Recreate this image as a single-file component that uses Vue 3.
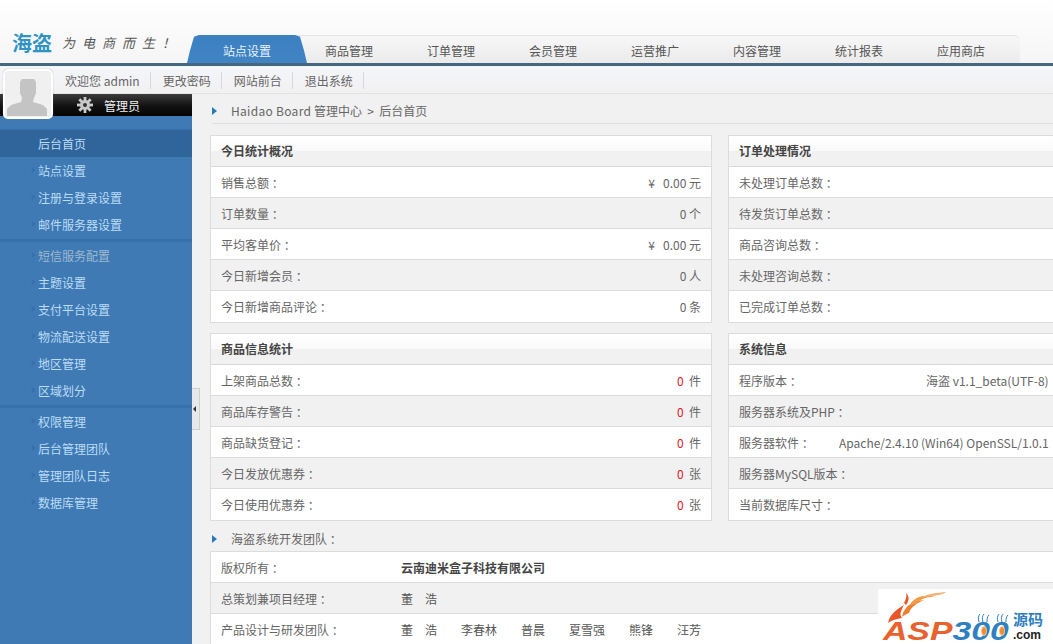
<script setup>
const tabs = ['站点设置', '商品管理', '订单管理', '会员管理', '运营推广', '内容管理', '统计报表', '应用商店']
const links = ['欢迎您 admin', '更改密码', '网站前台', '退出系统']
const menu = [
  ['后台首页', '站点设置', '注册与登录设置', '邮件服务器设置'],
  ['短信服务配置', '主题设置', '支付平台设置', '物流配送设置', '地区管理', '区域划分'],
  ['权限管理', '后台管理团队', '管理团队日志', '数据库管理']
]
const today = [
  ['销售总额 ：', '¥\u00a0\u00a0\u00a00.00 元'],
  ['订单数量 ：', '0 个'],
  ['平均客单价 ：', '¥\u00a0\u00a0\u00a00.00 元'],
  ['今日新增会员 ：', '0 人'],
  ['今日新增商品评论 ：', '0 条']
]
const orders = ['未处理订单总数 ：', '待发货订单总数 ：', '商品咨询总数 ：', '未处理咨询总数 ：', '已完成订单总数 ：']
const goods = [
  ['上架商品总数 ：', '件'],
  ['商品库存警告 ：', '件'],
  ['商品缺货登记 ：', '件'],
  ['今日发放优惠券 ：', '张'],
  ['今日使用优惠券 ：', '张']
]
const team = ['董　浩', '李春林', '普晨', '夏雪强', '熊锋', '汪芳']
</script>

<template>
  <div class="page">
    <header class="head">
      <div class="logo">
        <span class="logo-name">海盗</span>
        <span class="slogan">为电商而生！</span>
      </div>
      <nav class="tabs">
        <a v-for="(t, i) in tabs" :key="t" class="tab" :class="{ on: i === 0 }"><span>{{ t }}</span></a>
      </nav>
    </header>

    <div class="topbar">
      <a v-for="l in links" :key="l" class="toplink">{{ l }}</a>
    </div>

    <div class="avatar">
      <svg width="46" height="46" viewBox="0 0 46 46">
        <path fill="#c4c4c4" d="M17 6h12l2 3v11l-2 5-1 4 10 3 4 4v7H2v-7l4-4 10-3 1-4-2-5V9z" />
      </svg>
    </div>

    <div class="body">
      <aside class="side">
        <div class="role">
          <svg class="gear" width="16" height="16" viewBox="0 0 16 16">
            <g fill="#c9c9c9">
              <circle cx="8" cy="8" r="5" />
              <rect v-for="a in [0, 45, 90, 135]" :key="a" x="6.6" y="0" width="2.8" height="16" :transform="`rotate(${a} 8 8)`" />
            </g>
            <circle cx="8" cy="8" r="2" fill="#333" />
          </svg>
          <span>管理员</span>
        </div>
        <div v-for="(group, g) in menu" :key="g" class="group">
          <a v-for="m in group" :key="m" class="item" :class="{ active: m === '后台首页', dim: m === '短信服务配置' }">{{ m }}</a>
        </div>
      </aside>

      <main class="main">
        <button class="fold"></button>
        <div class="crumb"><i class="arrow"></i><span class="en">Haidao Board</span>&nbsp;管理中心&nbsp;&nbsp;&gt;&nbsp;&nbsp;后台首页</div>

        <div class="panels">
          <section class="panel">
            <h3>今日统计概况</h3>
            <div v-for="r in today" :key="r[0]" class="row"><span>{{ r[0] }}</span><span>{{ r[1] }}</span></div>
          </section>
          <section class="panel">
            <h3>订单处理情况</h3>
            <div v-for="r in orders" :key="r" class="row"><span>{{ r }}</span></div>
          </section>
          <section class="panel">
            <h3>商品信息统计</h3>
            <div v-for="r in goods" :key="r[0]" class="row"><span>{{ r[0] }}</span><span><b class="red">0</b>&nbsp;&nbsp;{{ r[1] }}</span></div>
          </section>
          <section class="panel">
            <h3>系统信息</h3>
            <div class="row start"><span class="sys-label">程序版本 ：</span><span class="ver">海盗 v1.1_beta(UTF-8)</span></div>
            <div class="row start"><span>服务器系统及PHP ：</span></div>
            <div class="row start"><span class="sys-label">服务器软件 ：</span><span>Apache/2.4.10 (Win64) OpenSSL/1.0.1</span></div>
            <div class="row start"><span>服务器MySQL版本 ：</span></div>
            <div class="row start"><span>当前数据库尺寸 ：</span></div>
          </section>
        </div>

        <div class="team-title"><i class="arrow"></i>海盗系统开发团队 ：</div>
        <section class="team">
          <div class="row start"><span class="team-label">版权所有 ：</span><strong>云南迪米盒子科技有限公司</strong></div>
          <div class="row start"><span class="team-label">总策划兼项目经理 ：</span><span class="dark">董　浩</span></div>
          <div class="row start">
            <span class="team-label">产品设计与研发团队 ：</span>
            <span class="names"><span v-for="n in team" :key="n" class="dark">{{ n }}</span></span>
          </div>
        </section>
      </main>
    </div>

    <div class="mark">
      <svg class="flame" width="70" height="42" viewBox="0 0 70 42">
        <path fill="#e8562a" d="M4 34C6 24 14 20 20 16c-3 6-5 9-2 13-5 1-10 2-14 5z" />
        <path fill="#ef7f2f" d="M18 28c2-12 12-16 22-17-7 3-13 7-15 13-2 1-5 2-7 4z" />
        <path fill="#f29a45" d="M26 16C30 8 40 5 52 8c-8-1-16 2-20 7z" />
        <path fill="#f4b070" d="M38 9C44 4 54 4 62 3c-3 3-9 3-14 4-4 0-7 1-10 2z" />
        <path fill="#e8562a" d="M20 14c2-4 3-6 2-10 4 4 3 8 0 12z" />
      </svg>
      <svg class="hairs" width="36" height="10" viewBox="0 0 36 10">
        <path fill="none" stroke="#2f7fc1" stroke-width="1" d="M3 9C2 6 2 3 4 1M7 9C6 6 6 3 8 1M11 9c0-3 0-5 2-7M22 9c-1-3-1-6 1-8M26 9c-1-3-1-6 1-8M30 9c0-3 0-5 2-7" />
      </svg>
      <span class="asp">ASP<em>300</em></span>
      <i class="egg e1"></i>
      <i class="egg e2"></i>
      <span class="mark-side"><b>源码</b><small>.com</small></span>
    </div>
  </div>
</template>

<style scoped>
.page {
  position: relative;
  width: 1053px;
  height: 644px;
  overflow: hidden;
  background: #f1f1f1;
  font-family: "Noto Sans CJK SC", "Liberation Sans", sans-serif;
  font-size: 12px;
  color: #666;
}

/* header */
.head {
  height: 66px;
  box-sizing: border-box;
  display: flex;
  align-items: flex-end;
  background: linear-gradient(#fff, #f5f5f5);
  border-bottom: 3px solid #47667f;
}
.logo {
  width: 196px;
  flex: none;
  height: 42px;
  padding-left: 12px;
  box-sizing: border-box;
  display: flex;
  align-items: center;
  gap: 10px;
}
.logo-name {
  font-size: 20px;
  font-weight: 700;
  color: #2f93c4;
}
.slogan {
  font-size: 13px;
  letter-spacing: 7px;
  font-style: italic;
  color: #555;
  white-space: nowrap;
}
.tabs {
  display: flex;
  height: 28px;
  background: linear-gradient(#f7f7f7, #ebebeb);
  border-top: 1px solid #e4e4e4;
  box-sizing: border-box;
  border-radius: 6px 6px 0 0;
  width: 824px;
}
.tab {
  position: relative;
  width: 102px;
  text-align: center;
  line-height: 30px;
  color: #555;
}
.tab span {
  position: relative;
}
.tab.on {
  color: #e8f3fb;
}
.tab.on::before {
  content: "";
  position: absolute;
  left: -9px;
  right: -9px;
  top: -1px;
  bottom: 0;
  background: linear-gradient(#3b80c1, #4184c4);
  clip-path: polygon(0 100%, 3px 55%, 7px 6%, 12px 0, calc(100% - 12px) 0, calc(100% - 7px) 6%, calc(100% - 3px) 55%, 100% 100%);
}

/* bar under header */
.topbar {
  height: 28px;
  box-sizing: border-box;
  display: flex;
  align-items: center;
  padding-left: 65px;
  background: linear-gradient(#fbf8f2, #f4f5f9 10%, #f1f1f1);
  border-top: 1px solid #e6f7fb;
  border-bottom: 1px solid #e2e2e2;
}
.toplink {
  padding-right: 10px;
  margin-right: 12px;
  border-right: 1px solid #d8d8d8;
  line-height: 17px;
  color: #666;
}
.avatar {
  position: absolute;
  left: 3px;
  top: 69px;
  width: 50px;
  height: 50px;
  box-sizing: border-box;
  padding-top: 2px;
  display: flex;
  justify-content: center;
  background: #f0f0f0;
  border: 2px solid #fff;
  border-radius: 5px;
  box-shadow: 0 0 1px #888;
  z-index: 2;
}

/* sidebar */
.body {
  display: flex;
  height: 550px;
}
.side {
  width: 192px;
  flex: none;
  background: #3f7ab5;
}
.role {
  height: 22px;
  display: flex;
  align-items: center;
  padding-left: 77px;
  gap: 11px;
  color: #f2f2f2;
  background: linear-gradient(#3c3c3c, #111 55%, #050505);
}
.gear {
  flex: none;
}
.group {
  border-bottom: 3px solid #3671ab;
  padding-bottom: 1px;
}
.role + .group {
  margin-top: 13px;
  border-top: 1px solid #3671ab;
}
.group:last-child {
  border-bottom: 0;
}
.item {
  display: block;
  position: relative;
  height: 27px;
  line-height: 27px;
  padding-left: 38px;
  color: #bcdcf5;
}
.item::before {
  content: "";
  position: absolute;
  left: 30px;
  top: 11px;
  width: 3px;
  height: 3px;
  border-top: 1px solid #336aa0;
  border-right: 1px solid #336aa0;
  transform: rotate(45deg);
}
.item.active {
  background: #2f659b;
}
.item.active::before {
  display: none;
}
.item.dim {
  color: #9db8cf;
}

/* main */
.main {
  position: relative;
  flex: 1;
  min-width: 0;
  padding: 0 0 0 18px;
}
.fold {
  position: absolute;
  left: 0;
  top: 294px;
  width: 8px;
  height: 42px;
  padding: 0;
  background: #e8e8e8;
  border: 1px solid #cfcfcf;
  border-left: 0;
}
.fold::after {
  content: "";
  position: absolute;
  left: 1px;
  top: 17px;
  border: 3px solid transparent;
  border-right-color: #333;
  border-left-width: 0;
}
.crumb {
  height: 30px;
  margin-left: 2px;
  display: flex;
  align-items: center;
  padding-top: 4px;
  box-sizing: border-box;
  color: #666;
  border-bottom: 1px solid #dedede;
  white-space: pre;
}
.en {
  letter-spacing: 0.3px;
}
.arrow {
  flex: none;
  width: 0;
  height: 0;
  margin-right: 14px;
  border-left: 5px solid #2a7ab8;
  border-top: 4px solid transparent;
  border-bottom: 4px solid transparent;
}
.panels {
  display: grid;
  grid-template-columns: 502px 502px;
  gap: 10px 16px;
  margin-top: 11px;
}
.panel {
  border: 1px solid #dcdcdc;
  background: #fff;
}
.panel h3 {
  margin: 0;
  height: 31px;
  line-height: 29px;
  padding-left: 10px;
  font-size: 12px;
  font-weight: 700;
  color: #444;
  background: linear-gradient(#fff, #fafafa 50%, #f1f1f1 50%, #f1f1f1);
  border-bottom: 1px solid #d8d8d8;
  box-sizing: border-box;
}
.row {
  height: 31px;
  box-sizing: border-box;
  display: flex;
  align-items: center;
  justify-content: space-between;
  padding: 0 10px;
  color: #666;
  background: #fff;
  border-bottom: 1px solid #dcdcdc;
  white-space: nowrap;
}
.row.start {
  justify-content: flex-start;
}
.row:nth-child(odd) {
  background: #f1f1f1;
}
.panel .row:last-child {
  border-bottom: 0;
}
.red {
  font-weight: 400;
  color: #e02020;
}
.sys-label {
  width: 100px;
  flex: none;
}
.ver {
  margin-left: 87px;
}
.team-title {
  height: 30px;
  box-sizing: border-box;
  padding-top: 5px;
  margin-left: 2px;
  display: flex;
  align-items: center;
  color: #666;
}
.team {
  border-left: 1px solid #dcdcdc;
  border-top: 1px solid #dcdcdc;
}
.team .row:nth-child(even) {
  background: #f1f1f1;
}
.team .row:nth-child(odd) {
  background: #fff;
}
.team-label {
  width: 180px;
  flex: none;
}
.team strong {
  color: #444;
  font-weight: 700;
}
.dark {
  color: #555;
}
.names {
  display: flex;
  gap: 24px;
}

/* watermark, sits over the page corner */
.mark {
  position: absolute;
  left: 878px;
  top: 589px;
  width: 175px;
  height: 55px;
  background: #fff;
  z-index: 3;
}
.flame {
  position: absolute;
  left: 6px;
  top: 0;
}
.hairs {
  position: absolute;
  left: 98px;
  top: 24px;
}
.asp {
  position: absolute;
  left: 5px;
  top: 30px;
  font-family: "Liberation Sans", sans-serif;
  font-size: 25px;
  line-height: 25px;
  font-weight: 700;
  font-style: italic;
  color: #e8622e;
  white-space: nowrap;
  transform: scaleX(1.35);
  transform-origin: left top;
}
.asp em {
  color: #2f7fc1;
}
.egg {
  position: absolute;
  top: 37px;
  width: 6px;
  height: 10px;
  border-radius: 50%;
  background: radial-gradient(#f08a30 35%, #fbe6c8 80%);
}
.e1 {
  left: 103px;
}
.e2 {
  left: 121px;
}
.mark-side {
  position: absolute;
  left: 135px;
  top: 22px;
  display: flex;
  flex-direction: column;
  line-height: 1;
}
.mark-side b {
  font-size: 15px;
  color: #2f7fc1;
}
.mark-side small {
  margin-top: 3px;
  font-family: "Liberation Sans", sans-serif;
  font-size: 12px;
  font-weight: 700;
  color: #222;
}
</style>

<style>
html, body {
  margin: 0;
  overflow: hidden;
}
</style>
